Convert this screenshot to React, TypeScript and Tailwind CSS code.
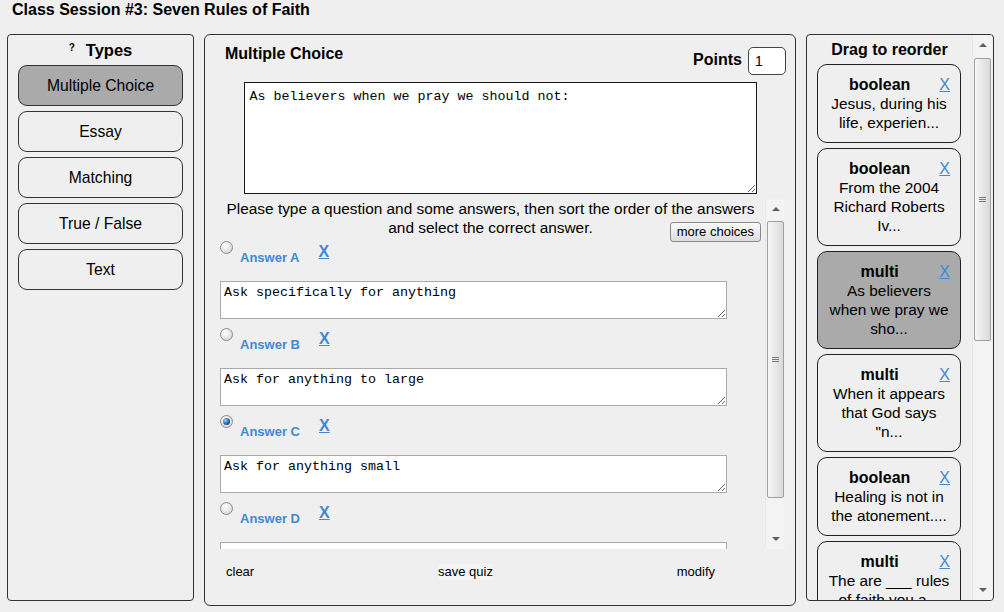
import React from "react";

type Card = { type: string; lines: string[]; selected?: boolean };

const cards: Card[] = [
  { type: "boolean", lines: ["Jesus, during his", "life, experien..."] },
  { type: "boolean", lines: ["From the 2004", "Richard Roberts", "Iv..."] },
  { type: "multi", lines: ["As believers", "when we pray we", "sho..."], selected: true },
  { type: "multi", lines: ["When it appears", "that God says", "\"n..."] },
  { type: "boolean", lines: ["Healing is not in", "the atonement...."] },
  { type: "multi", lines: ["The are ___ rules", "of faith you a..."] },
];

const answers = [
  { label: "Answer A", text: "Ask specifically for anything" },
  { label: "Answer B", text: "Ask for anything to large" },
  { label: "Answer C", text: "Ask for anything small", checked: true },
  { label: "Answer D", text: "" },
];

const types = ["Multiple Choice", "Essay", "Matching", "True / False", "Text"];

function Scrollbar({ gap, thumb }: { gap: string; thumb: string }) {
  return (
    <div className="w-[20px] shrink-0 flex flex-col bg-[#f3f3f3] border-l border-[#e8e8e8]">
      <div className="h-[20px] flex items-center justify-center">
        <div className="w-0 h-0 border-x-[4px] border-x-transparent border-b-[4px] border-b-[#606060]" />
      </div>
      <div className={gap} />
      <div
        className={`${thumb} mx-[1px] rounded-[2px] border border-[#a0a0a0] bg-[linear-gradient(to_right,#f7f7f7,#d9d9d9)] flex flex-col items-center justify-center gap-[1px]`}
      >
        <div className="w-[7px] h-px bg-[#7a7a7a]" />
        <div className="w-[7px] h-px bg-[#7a7a7a]" />
        <div className="w-[7px] h-px bg-[#7a7a7a]" />
      </div>
      <div className="flex-1" />
      <div className="h-[20px] flex items-center justify-center">
        <div className="w-0 h-0 border-x-[4px] border-x-transparent border-t-[4px] border-t-[#606060]" />
      </div>
    </div>
  );
}

function Radio({ checked }: { checked?: boolean }) {
  return (
    <span className="w-[13px] h-[13px] shrink-0 rounded-full border border-[#8c8c8c] bg-[radial-gradient(circle_at_40%_35%,#ffffff,#e2e2e2_60%,#bdbdbd)] flex items-center justify-center">
      {checked && (
        <span className="w-[7px] h-[7px] rounded-full bg-[radial-gradient(circle_at_35%_35%,#9ad6ff,#1e64a3_55%,#0a2c52)]" />
      )}
    </span>
  );
}

export default function App() {
  return (
    <div className="w-[1004px] h-[612px] overflow-hidden bg-[#efefef] text-black font-['Liberation_Sans',Arial,sans-serif]">
      <div className="h-[34px] pl-[12px] pt-[0px] text-[16px] leading-[20px] font-bold">
        Class Session #3: Seven Rules of Faith
      </div>

      <div className="flex items-start gap-[10px] pl-[7px]">
        {/* types */}
        <div className="w-[187px] h-[567px] border border-[#333] rounded-[4px]">
          <div className="h-[30px] flex items-center justify-center">
            <span className="text-[10px] font-bold leading-[10px] -mt-[4px] mr-[11px]">?</span>
            <span className="text-[16.5px] font-bold leading-[20px]">Types</span>
          </div>
          <div className="flex flex-col gap-[5px] px-[10px]">
            {types.map((t, i) => (
              <div
                key={t}
                className={`h-[41px] rounded-[9px] border border-[#333] flex items-center justify-center text-[15.7px] ${
                  i === 0 ? "bg-[#aaaaaa]" : "bg-[#efefef]"
                }`}
              >
                {t}
              </div>
            ))}
          </div>
        </div>

        {/* editor */}
        <div className="w-[592px] h-[572px] border border-[#333] rounded-[6px] flex flex-col">
          <div className="h-[47px] flex justify-between items-start pl-[20px] pr-[9px]">
            <div className="mt-[9px] text-[16px] font-bold leading-[20px]">Multiple Choice</div>
            <div className="mt-[12px] flex items-center gap-[6px]">
              <span className="text-[16px] font-bold leading-[20px] -mt-[3px]">Points</span>
              <div className="w-[38px] h-[28px] rounded-[5px] border border-[#444] bg-white text-[14px] pl-[6px] flex items-center">
                1
              </div>
            </div>
          </div>

          <textarea
            readOnly
            defaultValue="As believers when we pray we should not:"
            className="mx-auto block w-[513px] h-[112px] border border-[#1a1a1a] bg-white px-[5px] pt-[6px] text-[13.33px] leading-[15px] font-['Liberation_Mono','Courier_New',monospace] outline-none"
          />

          <div className="mt-[5px] ml-[7px] w-[573px] h-[350px] flex">
            <div className="flex-1 overflow-hidden pl-[8px]">
              <div className="text-[15.4px] leading-[19px] text-center -ml-[4px]">
                Please type a question and some answers, then sort the order of the answers
              </div>
              <div className="grid grid-cols-[1fr_auto_1fr] -ml-[4px] h-[22px]">
                <div />
                <div className="text-[15.4px] leading-[19px]">and select the correct answer.</div>
                <div className="flex justify-end pr-[4px]">
                  <div className="mt-[4px] h-[20px] px-[6px] rounded-[3px] border border-[#8a8a8a] bg-[linear-gradient(#fbfbfb,#dcdcdc)] text-[13px] leading-[18px]">
                    more choices
                  </div>
                </div>
              </div>
              {answers.map((a) => (
                <div key={a.label} className="mb-[8px]">
                  <div className="h-[41px] flex items-start pt-[1px]">
                    <Radio checked={a.checked} />
                    <span className="ml-[7px] mt-[9px] text-[13px] leading-[15px] font-bold text-[#4189d4]">
                      {a.label}
                    </span>
                    <span className="ml-[19px] mt-[2px] text-[16px] leading-[18px] font-bold text-[#4189d4] underline">
                      X
                    </span>
                  </div>
                  <textarea
                    readOnly
                    defaultValue={a.text}
                    className="block w-[507px] h-[38px] border border-[#a9a9a9] bg-white px-[3px] py-[3px] text-[13.33px] leading-[15px] font-['Liberation_Mono','Courier_New',monospace] outline-none"
                  />
                </div>
              ))}
            </div>
            <Scrollbar gap="h-[2px]" thumb="h-[277px]" />
          </div>

          <div className="mt-[15px] w-[507px] ml-[21px] pr-[18px] flex justify-between text-[13px] leading-[16px]">
            <span>clear</span>
            <span className="bg-[#f3f3f3]">save quiz</span>
            <span>modify</span>
          </div>
        </div>

        {/* list */}
        <div className="w-[188px] h-[567px] border border-[#333] rounded-[4px] flex overflow-hidden">
          <div className="flex-1 overflow-hidden">
            <div className="h-[29px] flex items-center justify-center text-[16px] font-bold">
              Drag to reorder
            </div>
            <div className="flex flex-col gap-[5px] pl-[10px]">
              {cards.map((c, i) => (
                <div
                  key={i}
                  className={`w-[144px] shrink-0 rounded-[10px] border border-[#222] py-[10px] px-[6px] ${
                    c.selected ? "bg-[#aaaaaa]" : "bg-[#efefef]"
                  }`}
                >
                  <div className="grid grid-cols-[1fr_auto] text-[16px] leading-[19px] pr-[4px]">
                    <span className="font-bold text-center">{c.type}</span>
                    <span className="text-[#4189d4] underline ml-[4px]">X</span>
                  </div>
                  {c.lines.map((l) => (
                    <div key={l} className="text-center text-[15.4px] leading-[19px] whitespace-nowrap">
                      {l}
                    </div>
                  ))}
                </div>
              ))}
            </div>
          </div>
          <div className="pr-[1px] flex">
            <Scrollbar gap="h-[3px]" thumb="h-[283px]" />
          </div>
        </div>
      </div>
    </div>
  );
}
